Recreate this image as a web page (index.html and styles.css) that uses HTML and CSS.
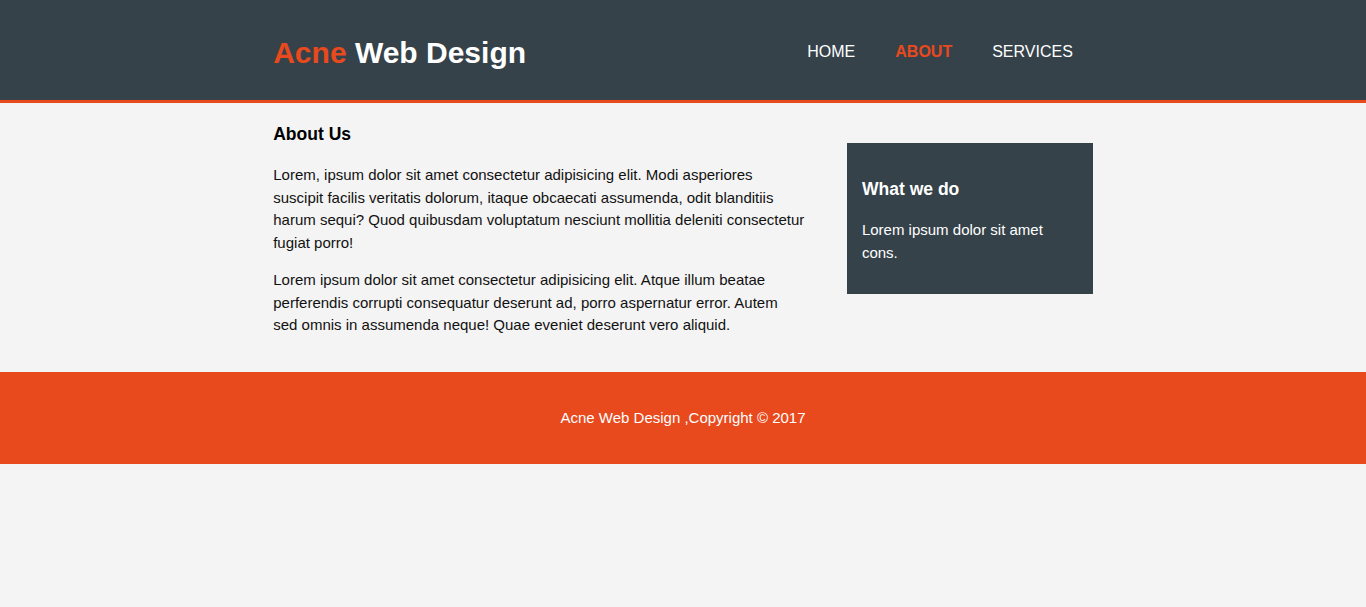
FILE: index.html
```html
<!DOCTYPE html>
<html lang="en">
<head>
<meta charset="utf-8">
<title>Acne Web Design | About</title>
<link rel="stylesheet" href="styles.css">
</head>
<body>
  <header class="site-header">
    <div class="container header-inner">
      <div class="branding">
        <h1><span class="highlight">Acne</span> Web Design</h1>
      </div>
      <nav class="main-nav">
        <ul>
          <li><a href="#">Home</a></li>
          <li class="current"><a href="#">About</a></li>
          <li><a href="#">Services</a></li>
        </ul>
      </nav>
    </div>
  </header>

  <section class="content">
    <div class="container content-inner">
      <article class="main-col">
        <h3 class="page-title">About Us</h3>
        <p>Lorem, ipsum dolor sit amet consectetur adipisicing elit. Modi asperiores suscipit facilis veritatis dolorum, itaque obcaecati assumenda, odit blanditiis harum sequi? Quod quibusdam voluptatum nesciunt mollitia deleniti consectetur fugiat porro!</p>
        <p>Lorem ipsum dolor sit amet consectetur adipisicing elit. Atque illum beatae perferendis corrupti consequatur deserunt ad, porro aspernatur error. Autem sed omnis in assumenda neque! Quae eveniet deserunt vero aliquid.</p>
      </article>
      <aside class="sidebar">
        <div class="dark">
          <h3>What we do</h3>
          <p>Lorem ipsum dolor sit amet cons.</p>
        </div>
      </aside>
    </div>
  </section>

  <footer class="site-footer">
    <p>Acne Web Design ,Copyright &copy; 2017</p>
  </footer>
</body>
</html>
```

FILE: styles.css
```css
html, body {
  margin: 0;
  padding: 0;
}

body {
  font: 15px/1.5 "Liberation Sans", Arial, Helvetica, sans-serif;
  background-color: #f4f4f4;
  color: #111;
}

.container {
  width: 60%;
  margin: 0 auto;
}

/* Header */
.site-header {
  background: #35424a;
  color: #ffffff;
  padding-top: 30px;
  height: 70px;
  border-bottom: 3px solid #e8491d;
}

.header-inner {
  display: flex;
  justify-content: space-between;
  align-items: flex-start;
}

.branding h1 {
  margin: 0;
  font-size: 30px;
  font-weight: bold;
  line-height: 1.5;
}

.highlight {
  color: #e8491d;
}

.main-nav {
  margin-top: 10px;
}

.main-nav ul {
  list-style: none;
  margin: 0;
  padding: 0;
  display: flex;
}

.main-nav li {
  padding: 0 20px;
}

.main-nav a {
  display: block;
  color: #ffffff;
  text-decoration: none;
  text-transform: uppercase;
  font-size: 16px;
  line-height: 1.5;
}

.main-nav .current a {
  color: #e8491d;
  font-weight: bold;
}

/* Content */
.content-inner {
  display: flex;
  justify-content: space-between;
  align-items: flex-start;
}

.main-col {
  width: 65%;
}

.main-col h3 {
  font-size: 17.55px;
  margin: 17.55px 0;
  color: #000;
}

.main-col p {
  margin: 15px 0;
}

.sidebar {
  width: 30%;
  margin-top: 40px;
}

.sidebar .dark {
  padding: 15px;
  background: #35424a;
  color: #ffffff;
}

.sidebar .dark h3 {
  font-size: 17.55px;
  margin: 17.55px 0;
}

.sidebar .dark p {
  margin: 15px 0;
}

/* Footer */
.site-footer {
  padding: 20px;
  margin-top: 20px;
  color: #ffffff;
  background-color: #e8491d;
  text-align: center;
}

.site-footer p {
  margin: 15px 0;
}
```
